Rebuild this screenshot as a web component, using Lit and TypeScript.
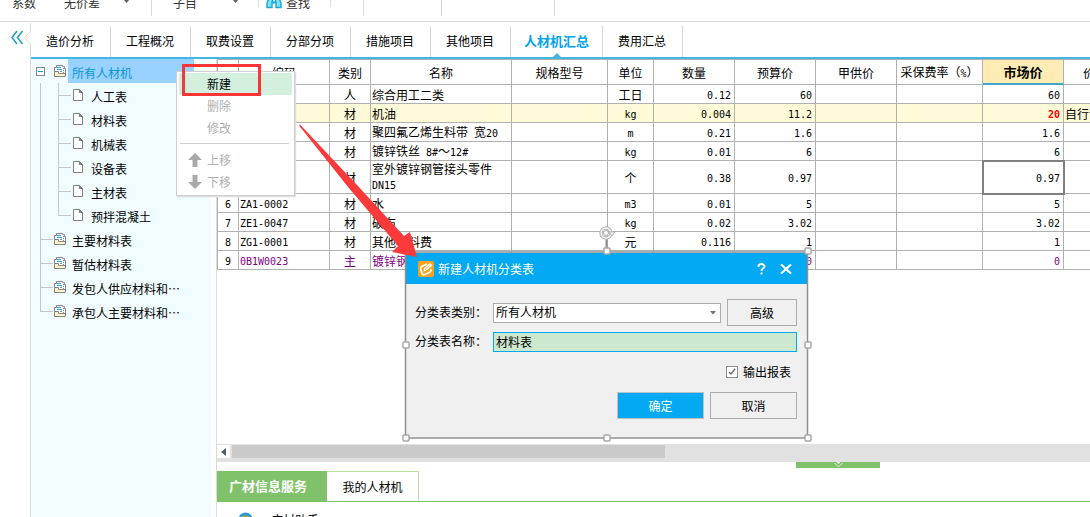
import { LitElement, html, css, svg, nothing } from "lit";
import { customElement, state } from "lit/decorators.js";
import { classMap } from "lit/directives/class-map.js";

interface Row {
  n: number;
  code?: string;
  kind: string;
  name: string;
  unit?: string;
  qty?: string;
  budget?: string;
  market?: string;
  source?: string;
  cls?: string;
}

const TABS = ["造价分析", "工程概况", "取费设置", "分部分项", "措施项目", "其他项目", "人材机汇总", "费用汇总"];

const CHILDREN = ["人工表", "材料表", "机械表", "设备表", "主材表", "预拌混凝土"];
const PARENTS = ["主要材料表", "暂估材料表", "发包人供应材料和…", "承包人主要材料和…"];

const ROWS: Row[] = [
  { n: 1, kind: "人", name: "综合用工二类", unit: "工日", qty: "0.12", budget: "60", market: "60" },
  { n: 2, kind: "材", name: "机油", unit: "kg", qty: "0.004", budget: "11.2", market: "20", source: "自行询价", cls: "marked" },
  { n: 3, kind: "材", name: "聚四氟乙烯生料带 宽20", unit: "m", qty: "0.21", budget: "1.6", market: "1.6" },
  { n: 4, kind: "材", name: "镀锌铁丝 8#～12#", unit: "kg", qty: "0.01", budget: "6", market: "6" },
  { n: 5, kind: "材", name: "室外镀锌钢管接头零件 DN15", unit: "个", qty: "0.38", budget: "0.97", market: "0.97", cls: "current" },
  { n: 6, code: "ZA1-0002", kind: "材", name: "水", unit: "m3", qty: "0.01", budget: "5", market: "5" },
  { n: 7, code: "ZE1-0047", kind: "材", name: "破布", unit: "kg", qty: "0.02", budget: "3.02", market: "3.02" },
  { n: 8, code: "ZG1-0001", kind: "材", name: "其他材料费", unit: "元", qty: "0.116", budget: "1", market: "1" },
  { n: 9, code: "0B1W0023", kind: "主", name: "镀锌钢管", budget: "0", market: "0", cls: "main" },
];

/** Sets runs of latin characters in the half-width face of the grid. */
const mixed = (text = "") =>
  text.split(/([\x20-\x7e]+)/).map((part) => (/^[\x20-\x7e]+$/.test(part) ? html`<span class="mono">${part}</span>` : part));

const bookIcon = html`<svg class="ico" width="12" height="12" viewBox="0 0 12 12">
  <path d="M.5 11.5V2.500H2.500V.5H8.500V1.500H10.500V3.500H11.500V11.500z" fill="#fff" stroke="#858585" />
  <path d="M1 6.500H4.500V8.500H11V11H1z" fill="#fdf6c8" />
  <path d="M.5 6.500H4.500V8.500H11.500" fill="none" stroke="#858585" />
  <path d="M3 2.500h4M3 4.500h5M6 6.500h2" stroke="#2e9fd8" />
  <path d="M9.500 3v1M9.500 5v1M9.500 7v1" stroke="#858585" />
</svg>`;

const pageIcon = html`<svg class="ico" width="12" height="12" viewBox="0 0 12 12">
  <path d="M.5.5h6l3 3v8h-9z" fill="#fff" stroke="#808080" />
  <path d="M6.500.5v3h3z" fill="#808080" stroke="#808080" />
</svg>`;

@customElement("app-root")
export class AppRoot extends LitElement {
  @state() private tab = "人材机汇总";
  @state() private selected = "所有人材机";
  @state() private report = true;

  static styles = css`
    :host {
      display: flex;
      flex-direction: column;
      position: relative;
      height: 100vh;
      overflow: hidden;
      background: #fff;
      color: #000;
      font: 12px/16px "Noto Sans CJK SC", sans-serif;
    }
    * {
      box-sizing: border-box;
    }
    svg {
      display: block;
      flex: none;
    }
    button {
      font: inherit;
      color: inherit;
      background: none;
      border: 0;
      padding: 0;
      margin: 0;
      white-space: nowrap;
    }
    .mono {
      font: 10px/13px "DejaVu Sans Mono", monospace;
    }

    .toolbar {
      display: flex;
      height: 22px;
      flex: none;
      border-bottom: 1px solid #dcdcdc;
      padding-left: 12px;
      color: #333;
    }
    .tool {
      display: flex;
      align-items: center;
      height: 6px;
    }
    .arrow {
      width: 5px;
      height: 3px;
      background: #5a6070;
      clip-path: polygon(0 0, 100% 0, 50% 100%);
      align-self: flex-start;
    }
    .rule {
      width: 1px;
      height: 16px;
      background: #d9d9d9;
    }
    .rule.short {
      height: 7px;
    }
    .t1 {
      gap: 28px;
      width: 139px;
    }
    .t1 .arrow {
      margin-left: -4px;
    }
    .t2 {
      width: 106px;
      padding-left: 21px;
      gap: 36px;
    }
    .t3 {
      width: 71px;
      padding-left: 7px;
      gap: 4px;
    }
    .g1 {
      width: 32px;
    }
    .g2 {
      width: 77px;
    }
    .g3 {
      width: 112px;
    }

    .main {
      display: flex;
      flex: 1;
      min-height: 0;
    }
    .rail {
      width: 31px;
      flex: none;
      display: flex;
      flex-direction: column;
    }
    .rail i {
      flex: 1;
      border-right: 1px solid #d9d9d9;
    }
    .work {
      flex: 1;
      min-width: 0;
      display: flex;
      flex-direction: column;
    }
    .tabs {
      display: flex;
      height: 37px;
      flex: none;
      padding-top: 4px;
      border-bottom: 2px solid #43b7e3;
    }
    .tab {
      position: relative;
      padding: 0 16px 2px 15px;
      border-right: 1px solid #d9d9d9;
    }
    .tab.on {
      padding: 0 13px 2px;
      font-size: 13px;
      font-weight: 700;
      color: #03a4ec;
    }
    .tab.on::after {
      content: "";
      position: absolute;
      left: 50%;
      bottom: 0;
      margin-left: -4px;
      border: 4px solid transparent;
      border-top: 0;
      border-bottom-color: #43b7e3;
    }
    .body {
      display: flex;
      flex: 1;
      min-height: 0;
    }

    .tree {
      width: 180px;
      flex: none;
      background: #f0fcff;
    }
    .node {
      display: flex;
      align-items: center;
      height: 24px;
      padding-left: 9px;
    }
    .node.root {
      padding-left: 5px;
    }
    .node.root .fold {
      margin-right: 9px;
    }
    .node .lab {
      height: 24px;
      margin-left: 2px;
      padding: 4px 0 0 4px;
      text-align: left;
    }
    .node.root .lab {
      width: 126px;
    }
    .node .lab.on {
      background: #99d1ff;
      color: #0598d4;
    }

    .right {
      flex: 1;
      min-width: 0;
      margin-left: 5px;
      border-left: 1px solid #dcdcdc;
      display: flex;
      flex-direction: column;
    }
    .grid {
      flex: 1;
      min-height: 0;
      overflow: hidden;
    }
    table {
      table-layout: fixed;
      width: 934px;
      min-width: 100%;
      border-spacing: 0;
      border: solid #b0b0b0;
      border-width: 1px 0 0 1px;
    }
    th,
    td {
      padding: 0 3px 0 1px;
      border: solid #b0b0b0;
      border-width: 0 1px 1px 0;
      height: 19px;
      line-height: 13px;
      font-weight: 400;
      overflow: hidden;
    }
    th {
      height: 25px;
      padding: 0;
      text-align: center;
      white-space: nowrap;
    }
    th.active {
      background: #ffecb4;
      border-bottom: 2px solid #3da5cf;
      font-size: 13px;
      font-weight: 700;
    }
    td.c {
      text-align: center;
      padding: 0;
    }
    td.r {
      text-align: right;
    }
    .marked td:not(:first-child) {
      background: #fffbd8;
    }
    .marked .market .mono {
      color: #f00;
      font-weight: 700;
    }
    .current td {
      height: 33px;
    }
    .current .market {
      outline: 2px solid #808080;
      outline-offset: -1px;
    }
    .main-mat td:not(:first-child) {
      color: #800080;
    }
    .nowrap {
      white-space: nowrap;
    }

    .scroll {
      display: flex;
      height: 18px;
      flex: none;
      background: #e1e1e1;
      padding-top: 1px;
    }
    .scroll button {
      display: grid;
      place-items: center;
      width: 13px;
      height: 13px;
      margin-right: 2px;
      background: #fff;
    }
    .thumb {
      width: calc(50% - 4px);
      height: 13px;
      background: #cacaca;
    }
    .pull {
      display: flex;
      justify-content: center;
      width: 84px;
      height: 6px;
      background: #80c269;
      flex: none;
      margin-left: 579px;
    }
    .subtabs {
      display: flex;
      height: 34px;
      flex: none;
      padding-top: 3px;
      border-bottom: 1px solid #7cc368;
    }
    .subtabs button {
      width: 92px;
      border: solid #b5dfa0;
      border-width: 1px 1px 0 0;
    }
    .subtabs .on {
      width: 110px;
      padding-right: 8px;
      border: 0;
      background: #80c269;
      color: #fff;
      font-size: 13px;
      font-weight: 700;
    }
    .helper {
      display: flex;
      gap: 18px;
      height: 15px;
      flex: none;
      padding: 10px 0 0 21px;
      overflow: hidden;
    }

    .menu {
      position: absolute;
      left: 176px;
      top: 71px;
      width: 119px;
      padding: 1px 2px 2px;
      background: #fff;
      border: 1px solid #cfcfcf;
      box-shadow: 1px 1px 1px #ddd;
      display: flex;
      flex-direction: column;
    }
    .menu button {
      display: flex;
      align-items: center;
      height: 22px;
      padding-left: 9px;
      color: #b0b0b0;
    }
    .menu button span {
      margin-left: 5px;
    }
    .menu button i {
      width: 14px;
    }
    .menu .hot {
      background: #d3f0df;
      color: #000;
    }
    .menu hr {
      width: 109px;
      height: 1px;
      margin: 4px 0 5px 1px;
      border: 0;
      background: #cfcfcf;
    }
    .box {
      position: absolute;
      left: 182px;
      top: 64px;
      width: 79px;
      height: 32px;
      border: 3px solid #fb3535;
    }
    .marks {
      position: absolute;
      left: 0;
      top: 0;
      pointer-events: none;
    }

    .dialog {
      position: absolute;
      left: 406px;
      top: 253px;
      width: 401px;
      background: #f0f0f0;
    }
    .title {
      display: flex;
      align-items: center;
      height: 31px;
      padding: 0 15px 0 12px;
      background: #03a9f2;
      color: #fff;
    }
    .title h2 {
      flex: 1;
      margin: 0 0 0 4px;
      font: inherit;
    }
    .title button + button {
      margin-left: 14px;
    }
    .form {
      display: grid;
      grid-template-columns: 78px 1fr 70px;
      column-gap: 0;
      row-gap: 6px;
      align-items: center;
      padding: 15px 10px 0 9px;
    }
    .form label {
      padding-bottom: 2px;
    }
    .pick {
      position: relative;
      margin-right: 6px;
    }
    .pick svg {
      position: absolute;
      right: 5px;
      top: 8px;
      pointer-events: none;
    }
    select,
    input.name {
      display: block;
      width: 100%;
      height: 20px;
      padding: 0 2px 1px;
      margin: 0;
      font: inherit;
      color: #000;
      border: 1px solid #ababab;
      border-radius: 0;
      appearance: none;
      background: #fff;
      outline: 0;
    }
    input.name {
      grid-column: 2 / 4;
      border-color: #03a9f2;
      background: #cce8cf;
    }
    .btn {
      height: 27px;
      border: 1px solid #adadad;
    }
    .check {
      display: flex;
      justify-content: flex-end;
      align-items: center;
      gap: 5px;
      padding: 12px 16px 0 0;
    }
    .check input {
      appearance: none;
      width: 12px;
      height: 12px;
      margin: 0;
      border: 1px solid #8c8c8c;
      background: #fff;
    }
    .check input:checked {
      background: #fff
        url('data:image/svg+xml,<svg xmlns="http://www.w3.org/2000/svg" width="10" height="10"><path d="M2 5l2 2 4-5" fill="none" stroke="%23606878" stroke-width="1.3"/></svg>');
    }
    .actions {
      display: flex;
      justify-content: flex-end;
      gap: 6px;
      padding: 12px 10px 18px;
    }
    .actions .btn {
      width: 87px;
    }
    .actions .ok {
      background: #03a9f2;
      border-color: #c0c0c0;
      color: #fff;
    }
  `;

  private label(name: string) {
    return html`<button
      role="treeitem"
      class=${classMap({ lab: true, on: this.selected === name })}
      @click=${() => (this.selected = name)}
    >${name}</button>`;
  }

  private renderTree() {
    return html`<nav class="tree" role="tree">
      <div class="node root">
        <svg class="fold" width="9" height="9" viewBox="0 0 9 9">
          <rect x=".5" y=".5" width="8" height="8" fill="#fff" stroke="#808890" />
          <path d="M2 4.500h5" stroke="#1b9ad2" />
        </svg>
        ${bookIcon}${this.label("所有人材机")}
      </div>
      ${CHILDREN.map(
        (name, i) => html`<div class="node">
          <svg width="33" height="24" viewBox="0 0 33 24">
            <path d="M.5 0V24M18.500 0V${i === CHILDREN.length - 1 ? 13 : 24}M19 12.500H31" stroke="#c3c7c9" fill="none" />
          </svg>
          ${pageIcon}${this.label(name)}
        </div>`
      )}
      ${PARENTS.map(
        (name, i) => html`<div class="node">
          <svg width="14" height="24" viewBox="0 0 14 24">
            <path d="M.5 0V${i === PARENTS.length - 1 ? 13 : 24}M1 12.500H13" stroke="#c3c7c9" fill="none" />
          </svg>
          ${bookIcon}${this.label(name)}
        </div>`
      )}
    </nav>`;
  }

  private renderTable() {
    const widths = [21, 91, 41, 141, 96, 46, 81, 81, 81, 86, 81];
    return html`<div class="grid">
      <table>
        <colgroup>
          ${widths.map((w) => html`<col style="width:${w}px" />`)}
          <col />
        </colgroup>
        <thead>
          <tr>
            <th></th>
            <th>编码</th>
            <th>类别</th>
            <th>名称</th>
            <th>规格型号</th>
            <th>单位</th>
            <th>数量</th>
            <th>预算价</th>
            <th>甲供价</th>
            <th>采保费率（<span class="mono">%</span>）</th>
            <th class="active">市场价</th>
            <th>价格来源</th>
          </tr>
        </thead>
        <tbody>
          ${ROWS.map(
            (r) => html`<tr class=${r.cls === "main" ? "main-mat" : r.cls ?? ""}>
              <td class="c">${mixed(String(r.n))}</td>
              <td>${mixed(r.code)}</td>
              <td class="c">${r.kind}</td>
              <td>${mixed(r.name)}</td>
              <td></td>
              <td class="c">${mixed(r.unit)}</td>
              <td class="r">${mixed(r.qty)}</td>
              <td class="r">${mixed(r.budget)}</td>
              <td></td>
              <td></td>
              <td class="r market">${mixed(r.market)}</td>
              <td class="nowrap">${r.source ?? nothing}</td>
            </tr>`
          )}
        </tbody>
      </table>
    </div>`;
  }

  private renderMenu() {
    const arrow = (d: string) => html`<svg width="14" height="14" viewBox="0 0 14 14"><path d=${d} fill="#a9a9a9" /></svg>`;
    return html`<div class="menu" role="menu">
      <button role="menuitem" class="hot"><i></i><span>新建</span></button>
      <button role="menuitem" disabled><i></i><span>删除</span></button>
      <button role="menuitem" disabled><i></i><span>修改</span></button>
      <hr />
      <button role="menuitem" disabled>${arrow("M7 0l7 7H9.500v7h-5V7H0z")}<span>上移</span></button>
      <button role="menuitem" disabled>${arrow("M7 14l7-7H9.500V0h-5v7H0z")}<span>下移</span></button>
    </div>`;
  }

  private renderDialog() {
    return html`<section class="dialog" role="dialog" aria-labelledby="dlg-title">
      <header class="title">
        <svg width="16" height="16" viewBox="0 0 16 16">
          <rect width="16" height="16" rx="2" fill="#f9a21b" />
          <path d="M9 3L3.500 5.500Q2 7 3 9.500l1 3Q5 14.500 7 13.500l5-2.500q1.500-1 1-3" fill="none" stroke="#fff" stroke-width="1.700" />
          <path d="M5.500 10.500l.5-3.500 6-5 2.500 2.500-6 5z" fill="#fff" />
          <path d="M7 8.500l4.500-4" stroke="#f9a21b" stroke-width=".8" />
        </svg>
        <h2 id="dlg-title">新建人材机分类表</h2>
        <button aria-label="帮助">
          <svg width="9" height="12" viewBox="0 0 9 12">
            <path d="M1.500 4V2.500q1-1.500 3-1.500t3 2q0 1.500-1.500 2.500T4.500 8" fill="none" stroke="#fff" stroke-width="2" />
            <path d="M3.500 9.500h2v2h-2z" fill="#fff" />
          </svg>
        </button>
        <button aria-label="关闭">
          <svg width="12" height="10" viewBox="0 0 12 10"><path d="M1 .5l10 9M11 .5l-10 9" stroke="#fff" stroke-width="2.200" /></svg>
        </button>
      </header>
      <div class="form">
        <label for="kind">分类表类别：</label>
        <div class="pick">
          <select id="kind"><option>所有人材机</option></select>
          <svg width="6" height="4" viewBox="0 0 6 4"><path d="M0 0h6L3 3.500z" fill="#6b7280" /></svg>
        </div>
        <button class="btn">高级</button>
        <label for="name">分类表名称：</label>
        <input id="name" class="name" type="text" value="材料表" />
      </div>
      <div class="check">
        <input id="report" type="checkbox" .checked=${this.report} @change=${() => (this.report = !this.report)} />
        <label for="report">输出报表</label>
      </div>
      <div class="actions">
        <button class="btn ok">确定</button>
        <button class="btn">取消</button>
      </div>
    </section>`;
  }

  /** Annotation layer: arrow from the menu entry to the dialog, and the dialog's selection frame. */
  private renderMarks() {
    const handles = [
      [406, 251], [607, 251], [808, 251],
      [406, 345], [808, 345],
      [406, 438], [607, 438], [808, 438],
    ];
    return html`<svg class="marks" width="830" height="460" viewBox="0 0 830 460">
      <path d="M405.500 252H807.500V438H405.500z" fill="none" stroke="#8f8f8f" stroke-width="1.500" />
      <path d="M606.500 239v10" stroke="#8f8f8f" stroke-width="2" />
      <circle cx="606" cy="233" r="5" fill="none" stroke="#b9b9b9" stroke-width="3.500" />
      <circle cx="606" cy="233" r="5" fill="none" stroke="#f4f4f4" stroke-width="1.300" />
      <circle cx="606" cy="233" r="2.500" fill="#fff" stroke="#b0b0b0" />
      <path d="M609 232h6l-3 4z" fill="#fff" stroke="#b0b0b0" />
      ${handles.map(
        ([x, y]) => svg`<rect x=${x - 3} y=${y - 3} width="6" height="6" rx="1" fill="#fff" stroke="#a8a8a8" stroke-width="1.500" />`
      )}
      <path d="M299 125.500l1-1L357 185l47 51 6-4 7 25-25-5 6-6-50-59z" fill="#fb3b3b" />
    </svg>`;
  }

  render() {
    return html`
      <div class="toolbar">
        <div class="tool t1"><span>系数</span><span>无价差</span><i class="arrow"></i></div>
        <i class="rule"></i>
        <div class="tool t2"><span>子目</span><i class="arrow"></i></div>
        <i class="rule short"></i>
        <div class="tool t3">
          <svg width="16" height="16" viewBox="0 0 16 16">
            <path d="M3.500 2h3v5h-.5v5.500H1V8zM12.500 2h-3v5h.5v5.500h5V8z" fill="#7fe0f5" stroke="#16a9d8" stroke-width="1.400" />
            <path d="M6 7.500h4" stroke="#16a9d8" stroke-width="2" />
          </svg>
          <span>查找</span>
        </div>
        <i class="rule short"></i>
        <div class="g1"></div>
        <i class="rule"></i>
        <div class="g2"></div>
        <i class="rule"></i>
        <div class="g3"></div>
        <i class="rule"></i>
      </div>
      <div class="main">
        <div class="rail">
          <svg width="31" height="24" viewBox="0 0 31 24">
            <path d="M17 9l-5 6.500 5 6.500M22.500 9l-5 6.500 5 6.500" fill="none" stroke="#1c9fc6" stroke-width="1.500" />
            <path d="M30.500 1v8l-6 6.500 6 6.500v2" fill="none" stroke="#d9d9d9" />
          </svg>
          <i></i>
        </div>
        <div class="work">
          <div class="tabs" role="tablist">
            ${TABS.map(
              (t) => html`<button
                role="tab"
                class=${classMap({ tab: true, on: t === this.tab })}
                @click=${() => (this.tab = t)}
              >${t}</button>`
            )}
          </div>
          <div class="body">
            ${this.renderTree()}
            <div class="right">
              ${this.renderTable()}
              <div class="scroll">
                <button aria-label="向左滚动"><svg width="5" height="8" viewBox="0 0 5 8"><path d="M5 0v8L0 4z" fill="#555b66" /></svg></button>
                <div class="thumb"></div>
              </div>
              <div class="pull">
                <svg width="9" height="6" viewBox="0 0 9 6"><path d="M2.500 0h4l-2 2z" fill="#fff" /><path d="M.5 1l4 4 4-4" fill="none" stroke="#dff0d8" /></svg>
              </div>
              <div class="subtabs" role="tablist">
                <button role="tab" class="on">广材信息服务</button>
                <button role="tab">我的人材机</button>
              </div>
              <div class="helper">
                <svg width="15" height="15" viewBox="0 0 15 15">
                  <circle cx="7.500" cy="7.500" r="7" fill="#2a9bd6" />
                  <path d="M3 5q4.500-3 9 0v5H3z" fill="#c9a227" />
                </svg>
                <span>广材助手</span>
              </div>
            </div>
          </div>
        </div>
      </div>
      ${this.renderMenu()}
      <div class="box"></div>
      ${this.renderDialog()} ${this.renderMarks()}
    `;
  }
}
